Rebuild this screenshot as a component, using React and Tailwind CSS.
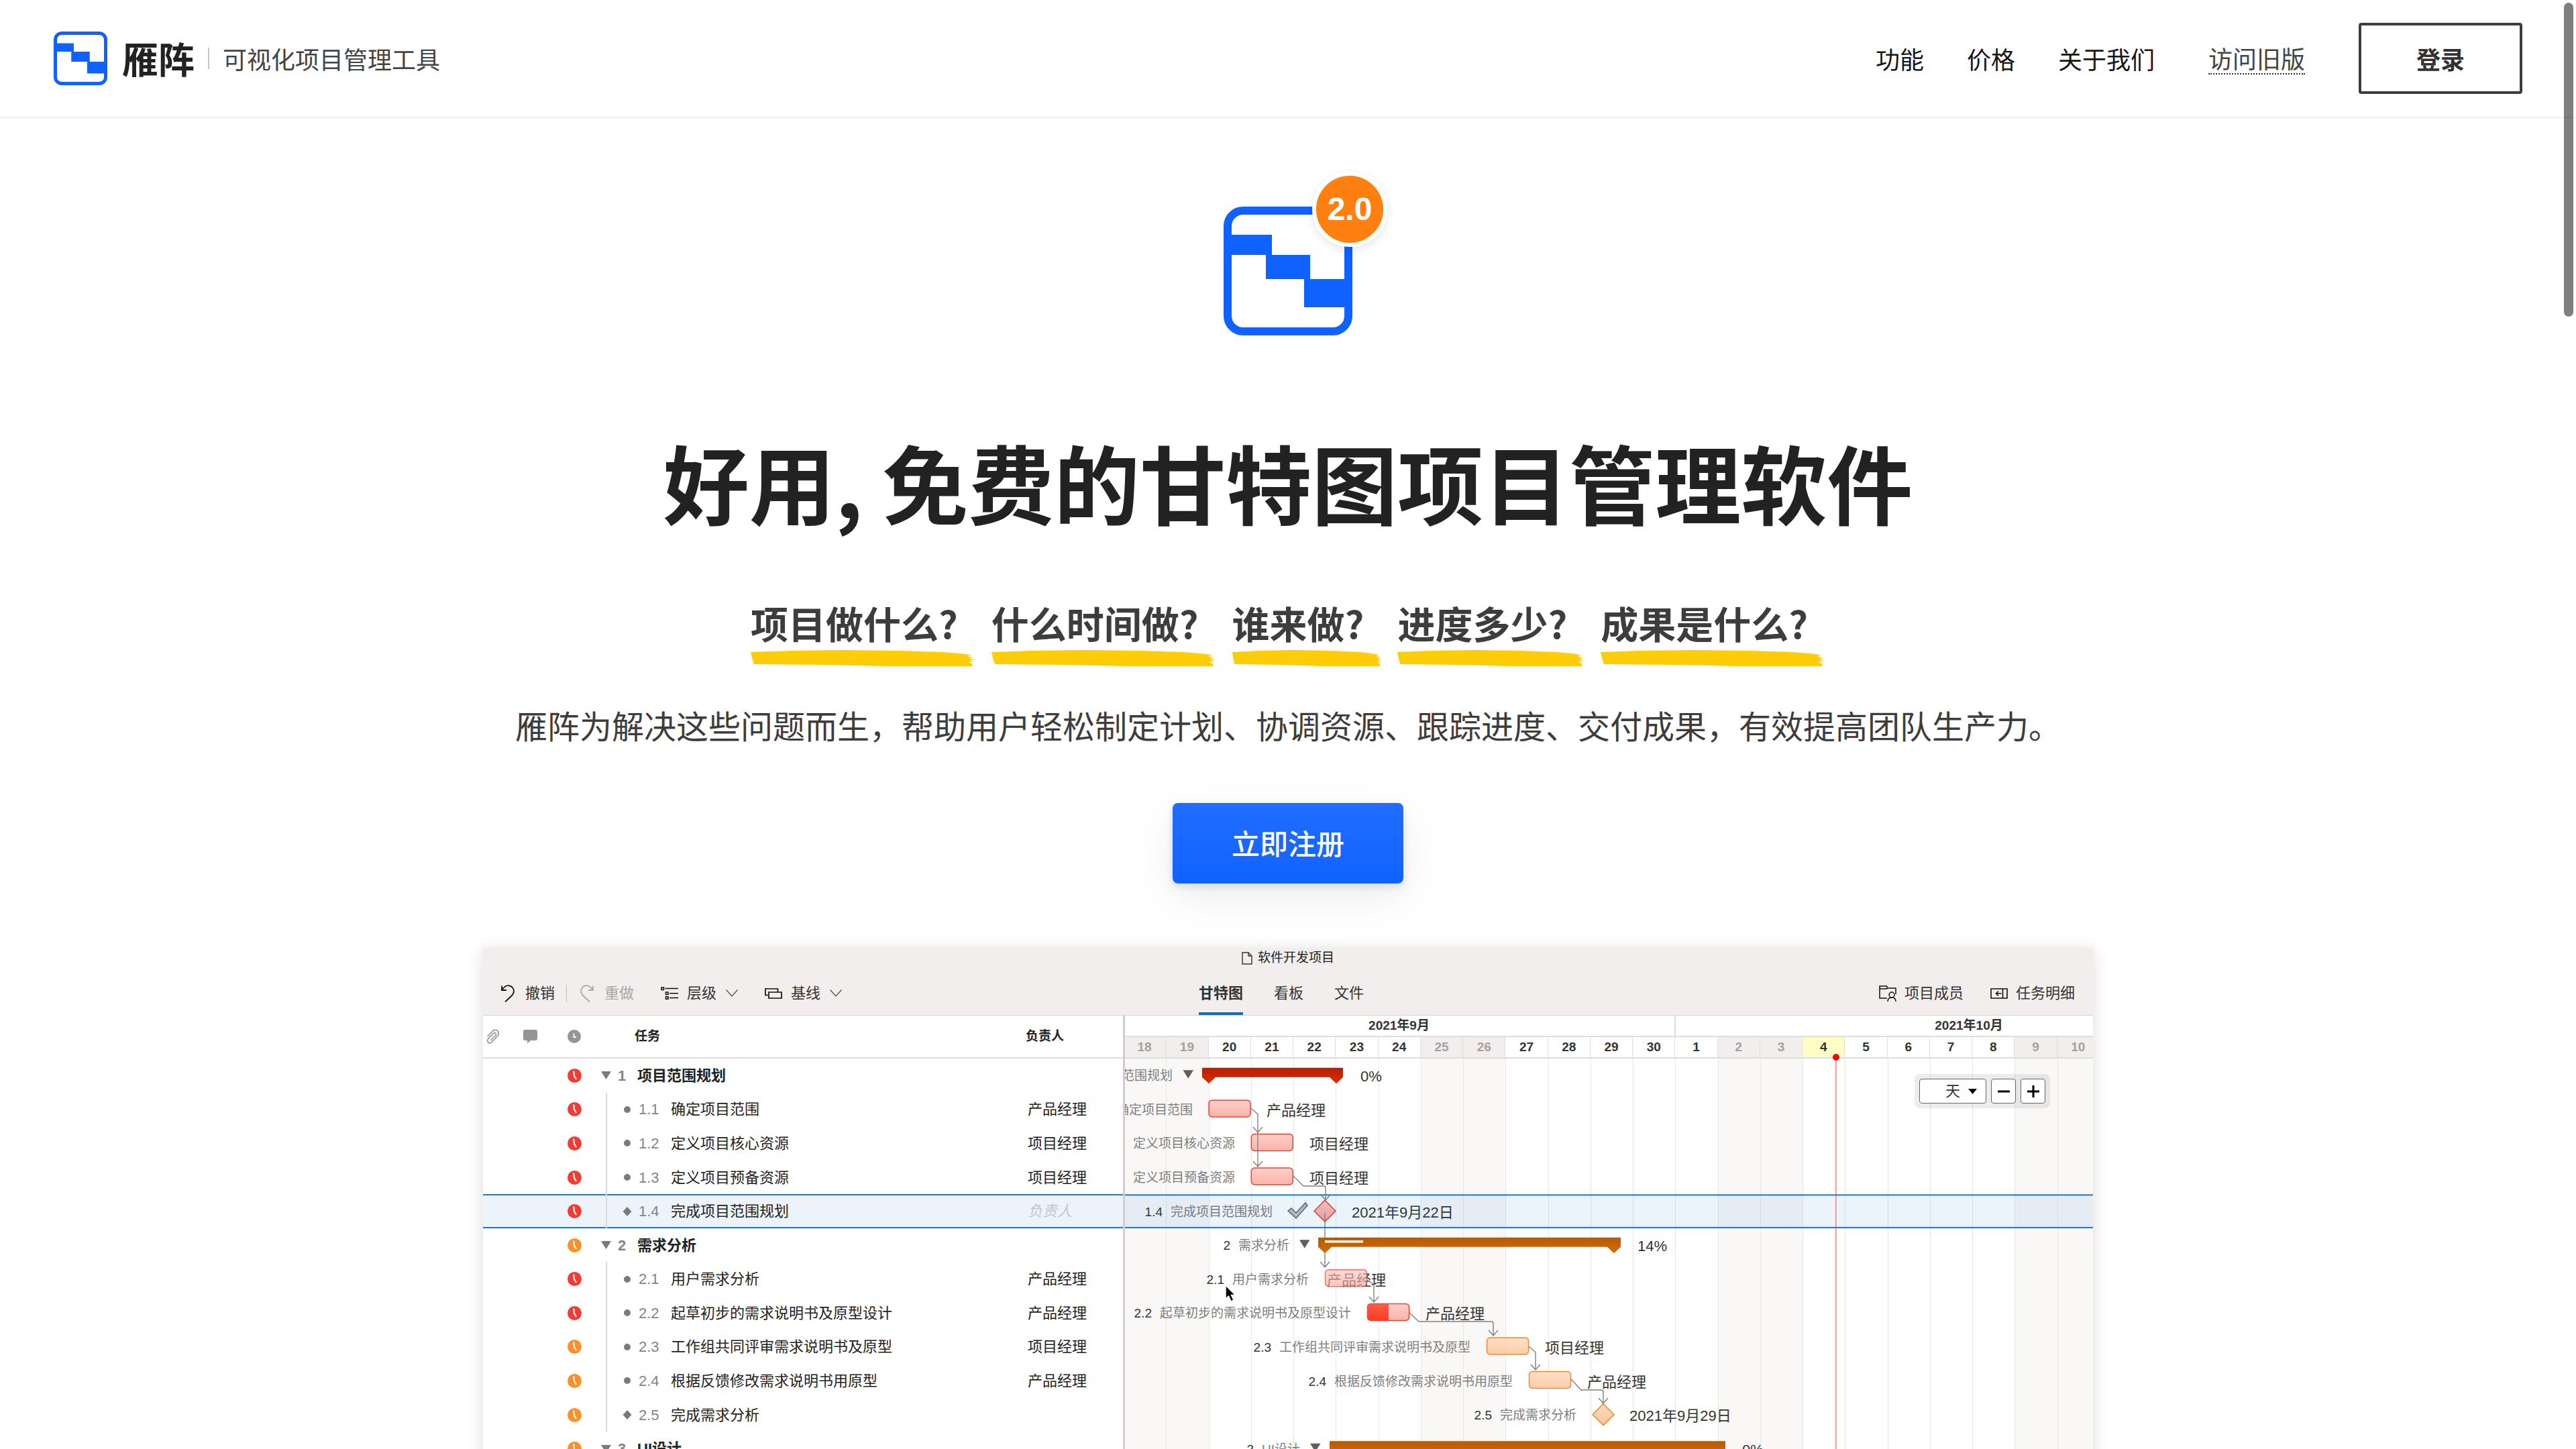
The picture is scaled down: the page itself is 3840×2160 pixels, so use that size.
const DAY_WIDTH = 1455 / 23;
const ROW_HEIGHT = 607 / 12;
const dayX = (k) => -2 + DAY_WIDTH * k;
const rowY = (i) => ROW_HEIGHT * (i + 0.5);

const tasks = [
  { no: '1', name: '项目范围规划', group: true, late: true },
  { no: '1.1', name: '确定项目范围', owner: '产品经理', late: true },
  { no: '1.2', name: '定义项目核心资源', owner: '项目经理', late: true },
  { no: '1.3', name: '定义项目预备资源', owner: '项目经理', late: true },
  { no: '1.4', name: '完成项目范围规划', milestone: true, late: true, selected: true },
  { no: '2', name: '需求分析', group: true },
  { no: '2.1', name: '用户需求分析', owner: '产品经理', late: true },
  { no: '2.2', name: '起草初步的需求说明书及原型设计', owner: '产品经理', late: true },
  { no: '2.3', name: '工作组共同评审需求说明书及原型', owner: '项目经理' },
  { no: '2.4', name: '根据反馈修改需求说明书用原型', owner: '产品经理' },
  { no: '2.5', name: '完成需求分析', milestone: true },
  { no: '3', name: 'UI设计', group: true },
];

const days = [18, 19, 20, 21, 22, 23, 24, 25, 26, 27, 28, 29, 30, 1, 2, 3, 4, 5, 6, 7, 8, 9, 10];
const weekend = (k) => k % 7 < 2;
const TODAY = 16;

const questions = ['项目做什么?', '什么时间做?', '谁来做?', '进度多少?', '成果是什么?'];

function Logo({ className }) {
  return (
    <svg viewBox="0 0 192 192" className={className} aria-hidden="true">
      <rect x="6" y="6" width="180" height="180" rx="23" fill="none" stroke="#0f62fe" strokeWidth="12" />
      <path d="M4 42h68v30h57v36h59v42h-68v-42H63V72H4z" fill="#0f62fe" />
    </svg>
  );
}

function Brush() {
  return (
    <svg viewBox="0 0 334 24" preserveAspectRatio="none" className="absolute left-0 top-full mt-px h-6 w-full" aria-hidden="true">
      <path
        d="M0 3L60 1L140 0L220 1L285 3L310 5L328 7L322 9L331 11L324 12L334 14L325 15L332 17L323 18L329 20L330 24L200 24L100 22L5 21L2 12Z"
        fill="#fecd0a"
      />
    </svg>
  );
}

function Clock({ color, className }) {
  return (
    <svg viewBox="0 0 20 20" className={className} aria-hidden="true">
      <circle cx="10" cy="10" r="10" fill={color} />
      <path d="M8.800 4.200L9.600 10.500L12 14.500" fill="none" stroke="#fff" strokeWidth="2" strokeLinecap="round" />
    </svg>
  );
}

function Chevron() {
  return (
    <svg viewBox="0 0 18 11" className="ml-3.5 h-[11px] w-[18px]" fill="none" stroke="#555" strokeWidth="1.300">
      <path d="M0.500 0.500L9 10L17.500 0.500" />
    </svg>
  );
}

function Undo({ className, color }) {
  return (
    <svg viewBox="0 0 20 26" className={className} fill="none" stroke={color} strokeWidth="1.800">
      <path d="M1 1.500V8H8M1.500 7.500C4 3.500 7 1 11 1.200C15.500 1.500 19 5 19 9.500C19 12.500 17.500 14.500 15.500 16.500L6 25.500" />
    </svg>
  );
}

function LevelIcon() {
  return (
    <svg viewBox="0 0 26 20" className="h-5 w-[26px]" fill="none" stroke="#111" strokeWidth="1.600">
      <path d="M1 1h3.500v3.500H1zM7.500 8h3.500v3.500H7.500zM7.500 14.800h3.500v3.500H7.500zM6.500 2.500H26M13 9.800h13M13 16.500h13" />
    </svg>
  );
}

function BaselineIcon() {
  return (
    <svg viewBox="0 0 26 16" className="h-4 w-[26px]" fill="none" stroke="#111" strokeWidth="1.700">
      <path d="M5 10.500H1V1h18.500v4.500M6 6h19v9H6z" />
    </svg>
  );
}

function MembersIcon() {
  return (
    <svg viewBox="0 0 26 24" className="h-6 w-[26px]" fill="none" stroke="#111" strokeWidth="1.500">
      <path d="M25 13V4H13l-2-3H1v18h11M1 5h10l2.500-1.500" />
      <circle cx="19" cy="14" r="4" />
      <path d="M13 24c0-4 2.500-6 6-6s6 2 6 6" />
    </svg>
  );
}

function DetailIcon() {
  return (
    <svg viewBox="0 0 26 16" className="h-4 w-[26px]" fill="none" stroke="#111" strokeWidth="1.600">
      <path d="M1 1h24v14H1zM18.500 1v14M16.500 8H9M12 4.500L8.500 8L12 11.500" />
    </svg>
  );
}

function SiteHeader() {
  return (
    <header className="flex h-[176px] items-center border-b-2 border-[#eeeeee] px-20 text-4xl text-[#161616]">
      <a href="#home" className="flex items-center">
        <Logo className="size-20" />
        <span className="ml-[22px] text-[54px] leading-[80px] font-bold text-[#222]">雁阵</span>
        <span className="ml-5 h-8 w-0.5 bg-[#c6c6c6]" />
        <span className="ml-5 text-[#444]">可视化项目管理工具</span>
      </a>
      <nav className="ml-auto flex items-center gap-16">
        <a href="#features">功能</a>
        <a href="#pricing">价格</a>
        <a href="#about">关于我们</a>
        <a href="#legacy" className="ml-4 border-b-2 border-dotted border-[#333] leading-[46px] text-[#444]">访问旧版</a>
        <button type="button" className="ml-4 h-[106px] w-[244px] rounded-sm border-4 border-[#3d3d3d] font-bold text-[#333]">登录</button>
      </nav>
    </header>
  );
}

function Toolbar() {
  return (
    <div className="border-b border-[#d6d4d3] bg-[#f2eeed] text-[22px] text-[#333]">
      <div className="flex h-[30px] items-center justify-center gap-2 text-[19px] text-[#222]">
        <svg viewBox="0 0 16 19" className="h-[19px] w-4" fill="none" stroke="#333" strokeWidth="1.400">
          <path d="M1 1h9l5 5v12H1zM10 1v5h5" />
        </svg>
        <h2>软件开发项目</h2>
      </div>
      <div className="mt-[5px] flex h-[65px] items-center">
        <div className="flex w-[1067px] items-center pl-[27px]">
          <button type="button" className="flex items-center gap-4">
            <Undo color="#111" className="h-[26px] w-5" />撤销
          </button>
          <span className="ml-[17px] h-[26px] w-px bg-[#bbb]" />
          <button type="button" disabled className="ml-5 flex items-center gap-4 text-[#a9a6a5]">
            <Undo color="#a9a6a5" className="h-[26px] w-5 -scale-x-100" />重做
          </button>
          <button type="button" className="ml-10 flex items-center">
            <LevelIcon /><span className="ml-[13px]">层级</span><Chevron />
          </button>
          <button type="button" className="ml-10 flex items-center">
            <BaselineIcon /><span className="ml-[13px]">基线</span><Chevron />
          </button>
        </div>
        <div className="flex h-full gap-[46px]">
          <button type="button" className="border-b-4 border-[#0b6cca] pt-1 font-bold">甘特图</button>
          <button type="button">看板</button>
          <button type="button">文件</button>
        </div>
        <div className="ml-auto flex gap-10 pr-[27px]">
          <button type="button" className="flex items-center gap-3"><MembersIcon />项目成员</button>
          <button type="button" className="flex items-center gap-3"><DetailIcon />任务明细</button>
        </div>
      </div>
    </div>
  );
}

function TaskTable() {
  return (
    <table className="block border-r-3 border-[#cfcdcd] text-[22px] text-[#222]">
      <thead className="block">
        <tr className="flex h-16 items-center border-b-2 border-[#dcdcdc] text-[19px] font-bold">
          <th className="flex w-[30px] justify-center" aria-label="附件">
            <svg viewBox="0 0 20 22" className="h-[22px] w-5" fill="none" stroke="#979593" strokeWidth="1.700" strokeLinecap="round">
              <path d="M2 11L9 3.500C11.500 0.500 15 1 17 3C19 5.500 18.500 8 17 10L8.500 19C6.500 21.500 4 21 2.800 19.800C1.300 18 1.500 16 3 14.300L10.500 6.500C11.800 5.200 13.200 5.200 14 6.200C14.800 7.200 14.500 8.500 13.500 9.500L6.800 16.500" />
            </svg>
          </th>
          <th className="flex w-20 justify-center" aria-label="评论">
            <svg viewBox="0 0 21 20" className="h-5 w-[21px]" fill="#979593">
              <path d="M3 0h15a3 3 0 0 1 3 3v10a3 3 0 0 1-3 3h-7l-5 4.500V16H3a3 3 0 0 1-3-3V3a3 3 0 0 1 3-3z" />
            </svg>
          </th>
          <th className="flex w-[52px] justify-center" aria-label="状态">
            <svg viewBox="0 0 20 20" className="size-5">
              <circle cx="10" cy="10" r="10" fill="#979593" />
              <path d="M9.500 5.500V11H13" fill="none" stroke="#fff" strokeWidth="1.800" />
            </svg>
          </th>
          <th className="flex-1 pl-16 text-left">任务</th>
          <th className="w-[145px] text-left">负责人</th>
        </tr>
      </thead>
      <tbody className="flex h-[607px] flex-col">
        {tasks.map((t) => (
          <tr
            key={t.no}
            className={t.selected
              ? 'flex flex-1 items-stretch bg-[#ecf3fb] shadow-[inset_0_2px_0_#2079cd,inset_0_-2px_0_#2079cd]'
              : 'flex flex-1 items-stretch'}
          >
            <td className="w-[30px]" />
            <td className="w-20" />
            <td className="flex w-[52px] items-center justify-center">
              <Clock color={t.late ? '#f33b34' : '#fb9028'} className="size-[21px]" />
            </td>
            {t.group ? (
              <td className="flex flex-1 items-center pl-3.5 font-bold">
                <svg viewBox="0 0 15 12" className="h-3 w-[15px]" fill="#7a7a7a"><path d="M0 0h15L7.500 12z" /></svg>
                <span className="ml-2.5 w-[29px] text-[#858585]">{t.no}</span>
                <span>{t.name}</span>
              </td>
            ) : (
              <td className="flex flex-1 pl-[21px]">
                <div className="flex items-center border-l-2 border-[#d9d9d9] pl-[23px]">
                  <svg viewBox="0 0 14 14" className="size-3.5" fill="#7a7a7a">
                    {t.milestone ? <path d="M7 0l6.500 7L7 14L0.500 7z" /> : <circle cx="7" cy="7" r="5" />}
                  </svg>
                  <span className="ml-2.5 w-12 text-[#858585]">{t.no}</span>
                  <span>{t.name}</span>
                </div>
              </td>
            )}
            <td className="flex w-[145px] items-center pl-[3px]">
              {t.selected ? <span className="text-[#c3c6ca] italic">负责人</span> : t.owner}
            </td>
          </tr>
        ))}
      </tbody>
    </table>
  );
}

function ChartLabel({ row, end }) {
  const t = tasks[row];
  return (
    <text x={end} y={rowY(row) + 7} textAnchor="end" fontSize="19" fill="#7d7d7d">
      <tspan fill="#333">{t.no}</tspan>
      <tspan dx="12">{t.name}</tspan>
    </text>
  );
}

function ChartText({ row, x, children }) {
  return <text x={x} y={rowY(row) + 9} fontSize="22" fill="#333">{children}</text>;
}

function Summary({ row, x1, x2, fill }) {
  const y = rowY(row) - 11.5;
  return (
    <path
      d={`M${x1} ${y}H${x2}V${y + 14}L${x2 - 10} ${y + 23.5}L${x2 - 20} ${y + 14}H${x1 + 20}L${x1 + 10} ${y + 23.5}L${x1} ${y + 14}Z`}
      fill={`url(#${fill})`}
    />
  );
}

function Fold({ row, x }) {
  const y = rowY(row) - 8;
  return <path d={`M${x} ${y}h15.500l-7.750 12.500z`} fill="#5f5f5f" />;
}

function Bar({ row, x, hue }) {
  const red = hue === 'red';
  return (
    <rect
      x={x + 0.5} y={rowY(row) - 14} width="62" height="25" rx="5"
      fill={red ? 'url(#barRed)' : 'url(#barOrange)'}
      stroke={red ? '#f5402f' : '#f08a30'} strokeWidth="1.500" fillOpacity="0.850"
    />
  );
}

function Diamond({ x, row, hue }) {
  const y = rowY(row) - 0.5;
  return (
    <path
      d={`M${x} ${y - 16}l16 16l-16 16l-16 -16z`}
      fill={hue === 'red' ? 'url(#barRed)' : 'url(#barOrange)'}
      stroke={hue === 'red' ? '#f5402f' : '#f08a30'} strokeWidth="1.500"
    />
  );
}

function Link({ d, x, y }) {
  return <path d={`${d}V${y}M${x - 7} ${y - 8}L${x} ${y}L${x + 7} ${y - 8}`} fill="none" stroke="#808080" strokeWidth="1.400" />;
}

function GanttCanvas() {
  return (
    <svg width="1443" height="607" className="block overflow-hidden">
      <defs>
        <linearGradient id="sumRed" x2="0" y2="1"><stop stopColor="#b32004" /><stop offset="1" stopColor="#dc2c03" /></linearGradient>
        <linearGradient id="sumOrange" x2="0" y2="1"><stop stopColor="#b65906" /><stop offset="1" stopColor="#d96c07" /></linearGradient>
        <linearGradient id="barRed" x2="0" y2="1"><stop stopColor="#ffc7c0" /><stop offset="1" stopColor="#fda59a" /></linearGradient>
        <linearGradient id="barOrange" x2="0" y2="1"><stop stopColor="#ffdcc0" /><stop offset="1" stopColor="#fdc398" /></linearGradient>
        <linearGradient id="done" x2="0" y2="1"><stop stopColor="#fb5c49" /><stop offset="1" stopColor="#fd3a22" /></linearGradient>
      </defs>
      {days.map((d, k) => weekend(k) && (
        <rect key={d} x={dayX(k)} y="0" width={DAY_WIDTH} height="607" fill="#f9f8f7" />
      ))}
      {days.map((d, k) => (
        <rect key={d} x={Math.round(dayX(k))} y="0" width="1" height="607" fill="#e9e7e6" />
      ))}
      <rect x="1059" y="0" width="1.500" height="607" fill="#fb8080" />

      <text x="71" y={rowY(0) + 7} textAnchor="end" fontSize="19" fill="#7d7d7d">项目范围规划</text>
      <Fold row={0} x={86.5} />
      <Summary row={0} x1={115} x2={325} fill="sumRed" />
      <ChartText row={0} x={351}>0%</ChartText>

      <ChartLabel row={1} end={101} />
      <Bar row={1} x={dayX(2)} hue="red" />
      <ChartText row={1} x={211}>产品经理</ChartText>

      <text x="164" y={rowY(2) + 7} textAnchor="end" fontSize="19" fill="#7d7d7d">定义项目核心资源</text>
      <Bar row={2} x={dayX(3)} hue="red" />
      <ChartText row={2} x={275}>项目经理</ChartText>

      <text x="164" y={rowY(3) + 7} textAnchor="end" fontSize="19" fill="#7d7d7d">定义项目预备资源</text>
      <Bar row={3} x={dayX(3)} hue="red" />
      <ChartText row={3} x={275}>项目经理</ChartText>

      <ChartLabel row={4} end={220} />
      <path d="M243 227l5-4l7 7l14-15l3 4l-17 19z" fill="#b9c2c9" stroke="#5d666d" strokeWidth="1.500" />
      <Diamond row={4} x={298} hue="red" />
      <ChartText row={4} x={338}>2021年9月22日</ChartText>

      <Link d="M188 74L198 83" x={198} y={110} />
      <Link d="M198 110" x={198} y={161} />
      <Link d="M251 175L266 190H296Q299 190 299 193" x={299} y={211} />
      <Link d="M298 230" x={298} y={311} />

      <ChartLabel row={5} end={245} />
      <Fold row={5} x={260} />
      <Summary row={5} x1={288} x2={739} fill="sumOrange" />
      <rect x="298" y="271" width="57" height="3.500" fill="#fff" />
      <ChartText row={5} x={764}>14%</ChartText>

      <ChartLabel row={6} end={274} />
      <ChartText row={6} x={301}>产品经理</ChartText>
      <g opacity="0.750"><Bar row={6} x={298} hue="red" /></g>
      <Link d="M361 330L371 337" x={371} y={363} />

      <ChartLabel row={7} end={337} />
      <Bar row={7} x={361} hue="red" />
      <path d={`M366 ${rowY(7) - 13.5}h27v24h-27q-4.500 0-4.500-4.500v-15q0-4.500 4.500-4.500z`} fill="url(#done)" />
      <ChartText row={7} x={448}>产品经理</ChartText>
      <Link d="M423 378L438 392H546Q549 392 549 395" x={549} y={413} />

      <ChartLabel row={8} end={515} />
      <Bar row={8} x={539} hue="orange" />
      <ChartText row={8} x={626}>项目经理</ChartText>
      <Link d="M602 429L612 438" x={612} y={464} />

      <ChartLabel row={9} end={578} />
      <Bar row={9} x={602} hue="orange" />
      <ChartText row={9} x={689}>产品经理</ChartText>
      <Link d="M665 478L680 494H710Q713 494 713 497" x={713} y={514} />

      <ChartLabel row={10} end={673} />
      <Diamond row={10} x={713} hue="orange" />
      <ChartText row={10} x={752}>2021年9月29日</ChartText>

      <ChartLabel row={11} end={261} />
      <Fold row={11} x={276} />
      <Summary row={11} x1={305} x2={895} fill="sumOrange" />
      <ChartText row={11} x={920}>0%</ChartText>

      <rect x="0" y={ROW_HEIGHT * 4} width="1443" height={ROW_HEIGHT} fill="#0067d0" fillOpacity="0.080" />
      <rect x="0" y={ROW_HEIGHT * 4} width="1443" height="2" fill="#2079cd" />
      <rect x="0" y={ROW_HEIGHT * 5 - 2} width="1443" height="2" fill="#2079cd" />

      <path d="M150 338v20l4.500-4l3.500 8l4-2l-3.500-7.500h6z" fill="#000" stroke="#fff" strokeWidth="1.500" />
    </svg>
  );
}

function Gantt() {
  return (
    <div className="relative overflow-hidden">
      <div className="-ml-0.5 text-[19px] leading-[30px] font-bold text-[#333]">
        <div className="flex h-8 border-b-2 border-[#dedede] text-center">
          <div className="w-[823px] shrink-0 border-r-2 border-[#dedede]">2021年9月</div>
          <div className="w-[874px] shrink-0">2021年10月</div>
        </div>
        <div className="grid h-8 w-[1455px] grid-cols-[repeat(23,1fr)] border-b-2 border-[#dcdcdc] text-center">
          {days.map((d, k) => (
            <div
              key={d}
              className={
                k === TODAY
                  ? 'border-r border-[#e0dedd] bg-[#fdfdc4]'
                  : weekend(k)
                    ? 'border-r border-[#e0dedd] bg-[#f2eeed] text-[#a3a1a0]'
                    : 'border-r border-[#e0dedd]'
              }
            >
              {d}
            </div>
          ))}
        </div>
      </div>
      <span className="absolute top-[57px] left-[1055px] size-2.5 rounded-full bg-[#f00]" />
      <GanttCanvas />
      <div className="absolute top-[87px] right-16 flex gap-[7px] rounded-lg bg-black/7 p-[7px] text-[22px] text-[#333]">
        <div className="relative">
          <select aria-label="时间刻度" className="block h-[37px] w-[100px] appearance-none rounded-sm border border-[#666] bg-white pl-[38px]">
            <option>天</option>
          </select>
          <svg viewBox="0 0 13 8" className="pointer-events-none absolute top-[15px] right-3.5 h-2 w-[13px]"><path d="M0 0h13L6.500 8z" /></svg>
        </div>
        <button type="button" aria-label="缩小" className="flex size-[37px] items-center justify-center rounded-sm border border-[#666] bg-white">
          <svg viewBox="0 0 20 20" className="size-5" stroke="#000" strokeWidth="3"><path d="M1 10h18" /></svg>
        </button>
        <button type="button" aria-label="放大" className="flex size-[37px] items-center justify-center rounded-sm border border-[#666] bg-white">
          <svg viewBox="0 0 20 20" className="size-5" stroke="#000" strokeWidth="3"><path d="M1 10h18M10 1v18" /></svg>
        </button>
      </div>
    </div>
  );
}

export default function App() {
  return (
    <div lang="zh-CN" className="relative h-screen overflow-hidden bg-white font-['Noto_Sans_CJK_SC','Liberation_Sans',sans-serif]">
      <SiteHeader />
      <main className="flex flex-col items-center">
        <div className="relative mt-[132px]">
          <Logo className="size-48" />
          <span className="absolute -top-[52px] -right-[52px] flex size-28 items-center justify-center rounded-full border-6 border-white bg-[#ff7f11] font-['Liberation_Sans',sans-serif] text-5xl font-bold text-white shadow-[0_4px_14px_rgba(0,0,0,0.1)]">
            2.0
          </span>
        </div>
        <h1 className="mt-[138px] text-[128px] leading-[160px] font-bold text-[#222]">好用, 免费的甘特图项目管理软件</h1>
        <ul className="mt-[90px] flex gap-6 text-[56px] leading-20 font-bold text-[#3d3d3d]">
          {questions.map((q) => (
            <li key={q} className="relative pr-[26px]">{q}<Brush /></li>
          ))}
        </ul>
        <p className="mt-[72px] text-5xl leading-20 text-[#3d3d3d]">
          雁阵为解决这些问题而生，帮助用户轻松制定计划、协调资源、跟踪进度、交付成果，有效提高团队生产力。
        </p>
        <button type="button" className="mt-[77px] h-[120px] w-[344px] rounded-lg bg-linear-to-b from-[#216dff] to-[#0f62fe] pb-1 text-[42px] font-medium text-white shadow-[0_4px_12px_rgba(20,20,80,0.12),0_20px_60px_rgba(0,0,0,0.08)]">
          立即注册
        </button>
        <section className="mt-24 w-full max-w-[2400px] bg-white font-['Liberation_Sans','Noto_Sans_CJK_SC',sans-serif] shadow-[0_4px_24px_rgba(0,0,0,0.14)]">
          <Toolbar />
          <div className="grid grid-cols-[957px_1fr]">
            <TaskTable />
            <Gantt />
          </div>
        </section>
      </main>
      <div className="absolute top-1 right-1 h-[468px] w-3.5 rounded-full bg-black/50" />
    </div>
  );
}
